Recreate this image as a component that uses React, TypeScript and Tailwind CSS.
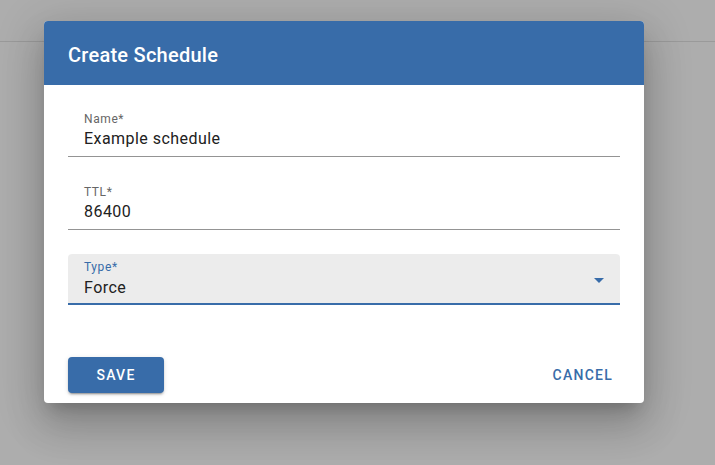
import React from 'react';

const blue = '#386ca9';

function TextField({ label, value }: { label: string; value: string }) {
    return (
        <div className="border-b border-[#949494] pb-[5px] pl-4">
            <div className="text-[12px] leading-[14px] tracking-[0.6px] text-[#666666]">{label}</div>
            <div className="mt-[1px] text-[16px] leading-[24px] tracking-[0.45px] text-[#212121]">{value}</div>
        </div>
    );
}

function SelectField({ label, value }: { label: string; value: string }) {
    return (
        <div className="flex rounded-t-[4px] border-b-2 border-[#386ca9] bg-[#ececec] pb-[3px] pl-4 pt-[6px]">
            <div className="flex-1">
                <div className="text-[12px] leading-[14px] tracking-[0.6px] text-[#386ca9]">{label}</div>
                <div className="mt-[2px] text-[16px] leading-[24px] tracking-[0.45px] text-[#212121]">{value}</div>
            </div>
            <svg viewBox="0 0 24 24" className="mr-[9px] mt-[8px] h-6 w-6" fill="#386ca9">
                <path d="M7 10l5 5 5-5z" />
            </svg>
        </div>
    );
}

export default function App() {
    return (
        <div className="relative h-[465px] w-[715px] overflow-hidden bg-white font-['Roboto',sans-serif]">
            <div className="h-[42px] border-b border-[#e4e4e4] bg-[#ffffff]" />

            {/* modal backdrop */}
            <div className="absolute inset-0 bg-black/[0.32] pl-[44px] pt-[21px]">
                <div className="w-[600px] rounded-[4px] bg-white shadow-[0px_11px_15px_-7px_rgba(0,0,0,0.2),0px_24px_38px_3px_rgba(0,0,0,0.14),0px_9px_46px_8px_rgba(0,0,0,0.12)]">
                    <div className="h-[64px] rounded-t-[4px] px-6 pt-[18px]" style={{ backgroundColor: blue }}>
                        <h2 className="text-[20px] font-medium leading-[32px] tracking-[0.25px] text-white">Create Schedule</h2>
                    </div>

                    <div className="px-6 pt-[27px]">
                        <TextField label="Name*" value="Example schedule" />
                        <div className="mt-[28px]">
                            <TextField label="TTL*" value="86400" />
                        </div>
                        <div className="mt-[24px]">
                            <SelectField label="Type*" value="Force" />
                        </div>
                    </div>

                    <div className="flex items-center justify-between pb-[10px] pl-6 pr-[23px] pt-[52px]">
                        <button className="h-9 w-[96px] rounded-[4px] bg-[#386ca9] text-[14px] font-medium tracking-[1.25px] text-white shadow-[0px_3px_1px_-2px_rgba(0,0,0,0.2),0px_2px_2px_0px_rgba(0,0,0,0.14),0px_1px_5px_0px_rgba(0,0,0,0.12)]">
                            SAVE
                        </button>
                        <button className="h-9 px-2 text-[14px] font-medium tracking-[1.25px] text-[#386ca9]">
                            CANCEL
                        </button>
                    </div>
                </div>
            </div>
        </div>
    );
}
